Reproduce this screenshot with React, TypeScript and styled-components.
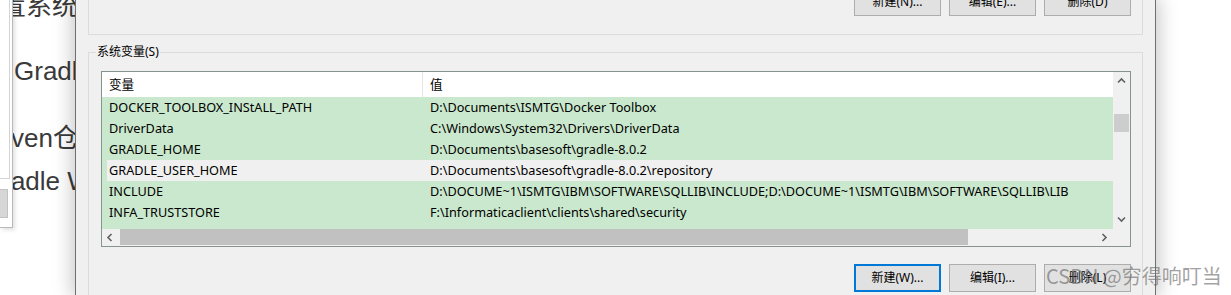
import React from "react";
import styled, { createGlobalStyle } from "styled-components";

const GlobalStyle = createGlobalStyle`
  html, body { margin: 0; padding: 0; background: #ffffff; overflow: hidden; }
  #root { width: 1231px; height: 295px; }
`;

const UI_FONT = `"Noto Sans", "Noto Sans CJK SC", sans-serif`;
const GREEN = "#cae8cd";

const Screen = styled.div`
  position: relative;
  display: flex;
  width: 1231px;
  height: 295px;
  overflow: hidden;
  background: #ffffff;
`;

/* ---------- page behind the dialog ---------- */
const PageStrip = styled.div`
  position: relative;
  flex: none;
  width: 75px;
  height: 295px;
  overflow: hidden;
  background: #ffffff;
`;

const PageLine = styled.div<{ $top: number; $indent: number }>`
  margin-top: ${(p) => p.$top}px;
  margin-left: ${(p) => p.$indent}px;
  font: 26px/30px "Liberation Sans", "Noto Sans CJK SC", sans-serif;
  color: #3a3a3a;
  white-space: nowrap;
`;

const SidePanel = styled.div`
  position: absolute;
  left: 0;
  top: 0;
  width: 12px;
  height: 227px;
  display: flex;
  flex-direction: column;
  background: #ffffff;
  border-right: 1px solid #b9b9b9;
  border-bottom: 1px solid #b9b9b9;
  box-shadow: 2px 2px 4px rgba(0, 0, 0, 0.12);
`;

const SidePanelFrame = styled.div`
  width: 9px;
  height: 178px;
  border-right: 1px solid #d4d4d4;
  border-bottom: 1px solid #d4d4d4;
`;

const SidePanelButton = styled.div`
  width: 7px;
  height: 27px;
  margin-top: 10px;
  background: #d6d6d6;
  border: 1px solid #c2c2c2;
  border-left: none;
`;

/* ---------- dialog ---------- */
const Dialog = styled.div`
  position: relative;
  z-index: 1;
  flex: none;
  width: 1081px;
  height: 295px;
  display: flex;
  flex-direction: column;
  padding: 0 12px;
  box-sizing: border-box;
  background: #f0f0f0;
  border-left: 1px solid #6f6f6f;
  border-right: 1px solid #6f6f6f;
  box-shadow: 0 0 18px 3px rgba(0, 0, 0, 0.22);
  font-family: ${UI_FONT};
`;

const TopGroup = styled.div`
  flex: none;
  height: 34px;
  display: flex;
  justify-content: flex-end;
  align-items: flex-start;
  gap: 8px;
  padding-right: 11px;
  border: 1px solid #dcdcdc;
  border-top: none;
`;

const Button = styled.button<{ $focused?: boolean; $lift?: boolean }>`
  flex: none;
  width: 87px;
  height: 28px;
  margin-top: ${(p) => (p.$lift ? "-12px" : "0")};
  padding: 0;
  box-sizing: border-box;
  background: #e1e1e1;
  border: ${(p) => (p.$focused ? "2px solid #0078d7" : "1px solid #adadad")};
  font: 12px/16px ${UI_FONT};
  color: #000000;
  text-align: center;
`;

const SystemGroup = styled.fieldset`
  flex: none;
  margin: 9px 0 0 0;
  padding: 11px 11px 40px 7px;
  border: 1px solid #dcdcdc;
  min-width: 0;
`;

const GroupLabel = styled.legend`
  padding: 0 1px;
  font: 12px/16px ${UI_FONT};
  color: #000000;
`;

const ListBox = styled.div`
  margin-left: 5px;
  height: 176px;
  box-sizing: border-box;
  border: 1px solid #85958b;
  display: grid;
  grid-template-columns: 1fr 17px;
  grid-template-rows: 157px 17px;
  background: #f0f0f0;
`;

const ListContent = styled.div`
  display: flex;
  flex-direction: column;
  overflow: hidden;
  background: ${GREEN};
`;

const HeaderRow = styled.div`
  flex: none;
  height: 25px;
  display: grid;
  grid-template-columns: 321px 1fr;
  background: #ffffff;
`;

const HeaderCell = styled.div<{ $divider?: boolean }>`
  padding-left: 7px;
  font: 12.6px/25px ${UI_FONT};
  color: #000000;
  border-right: ${(p) => (p.$divider ? "1px solid #e5e5e5" : "none")};
  white-space: nowrap;
`;

const Row = styled.div<{ $selected?: boolean }>`
  flex: none;
  height: 21px;
  margin-left: 5px;
  display: grid;
  grid-template-columns: 316px 1fr;
  background: ${(p) => (p.$selected ? "#f0f0f0" : "transparent")};
`;

const Cell = styled.div<{ $pad: number }>`
  padding-left: ${(p) => p.$pad}px;
  font: 12.7px/21px ${UI_FONT};
  color: #000000;
  white-space: nowrap;
  overflow: hidden;
`;

const VScroll = styled.div`
  display: flex;
  flex-direction: column;
  align-items: center;
  background: #f0f0f0;
`;

const ArrowBox = styled.div<{ $w: number; $h: number }>`
  flex: none;
  width: ${(p) => p.$w}px;
  height: ${(p) => p.$h}px;
  display: flex;
  align-items: center;
  justify-content: center;
`;

const VThumb = styled.div`
  flex: none;
  width: 15px;
  height: 18px;
  margin-top: 23px;
  background: #cdcdcd;
`;

const Spacer = styled.div`
  flex: 1;
`;

const HScroll = styled.div`
  display: flex;
  align-items: flex-start;
  background: #f0f0f0;
`;

const HThumb = styled.div`
  flex: none;
  width: 848px;
  height: 16px;
  margin-left: 1px;
  background: #c1c1c1;
`;

const Corner = styled.div`
  background: #f0f0f0;
`;

const ButtonRow = styled.div`
  display: flex;
  justify-content: flex-end;
  gap: 8px;
  margin-top: 17px;
`;

const Watermark = styled.div`
  position: absolute;
  z-index: 2;
  left: 1046px;
  top: 262px;
  font: 20px/28px "Noto Sans CJK SC", sans-serif;
  color: rgba(100, 100, 100, 0.6);
  white-space: nowrap;
  pointer-events: none;
`;

const Chevron = ({ dir }: { dir: "up" | "down" | "left" | "right" }) => {
  const pts: Record<string, string> = {
    up: "1,5.5 4.5,2 8,5.5",
    down: "1,2.5 4.5,6 8,2.5",
    left: "5.5,1 2,4.5 5.5,8",
    right: "2.5,1 6,4.5 2.5,8",
  };
  return (
    <svg width="9" height="9" viewBox="0 0 9 9">
      <polyline points={pts[dir]} fill="none" stroke="#606060" strokeWidth="1.6" />
    </svg>
  );
};

const rows = [
  { name: "DOCKER_TOOLBOX_INStALL_PATH", value: "D:\\Documents\\ISMTG\\Docker Toolbox" },
  { name: "DriverData", value: "C:\\Windows\\System32\\Drivers\\DriverData" },
  { name: "GRADLE_HOME", value: "D:\\Documents\\basesoft\\gradle-8.0.2" },
  { name: "GRADLE_USER_HOME", value: "D:\\Documents\\basesoft\\gradle-8.0.2\\repository", selected: true },
  {
    name: "INCLUDE",
    value: "D:\\DOCUME~1\\ISMTG\\IBM\\SOFTWARE\\SQLLIB\\INCLUDE;D:\\DOCUME~1\\ISMTG\\IBM\\SOFTWARE\\SQLLIB\\LIB",
  },
  { name: "INFA_TRUSTSTORE", value: "F:\\Informaticaclient\\clients\\shared\\security" },
  { name: "", value: "" },
];

export default function App() {
  return (
    <>
      <GlobalStyle />
      <Screen>
        <PageStrip>
          <PageLine $top={-9} $indent={0}>置系统变量</PageLine>
          <PageLine $top={35} $indent={14}>Gradle</PageLine>
          <PageLine $top={37} $indent={-25}>Maven仓库</PageLine>
          <PageLine $top={13} $indent={-18}>Gradle Wrapper</PageLine>
          <SidePanel>
            <SidePanelFrame />
            <SidePanelButton />
          </SidePanel>
        </PageStrip>

        <Dialog>
          <TopGroup>
            <Button $lift>新建(N)...</Button>
            <Button $lift>编辑(E)...</Button>
            <Button $lift>删除(D)</Button>
          </TopGroup>

          <SystemGroup>
            <GroupLabel>系统变量(S)</GroupLabel>
            <ListBox>
              <ListContent>
                <HeaderRow>
                  <HeaderCell $divider>变量</HeaderCell>
                  <HeaderCell>值</HeaderCell>
                </HeaderRow>
                {rows.map((r, i) => (
                  <Row key={i} $selected={r.selected}>
                    <Cell $pad={2}>{r.name}</Cell>
                    <Cell $pad={7}>{r.value}</Cell>
                  </Row>
                ))}
              </ListContent>
              <VScroll>
                <ArrowBox $w={17} $h={19}>
                  <Chevron dir="up" />
                </ArrowBox>
                <VThumb />
                <Spacer />
                <ArrowBox $w={17} $h={19}>
                  <Chevron dir="down" />
                </ArrowBox>
              </VScroll>
              <HScroll>
                <ArrowBox $w={17} $h={17}>
                  <Chevron dir="left" />
                </ArrowBox>
                <HThumb />
                <Spacer />
                <ArrowBox $w={17} $h={17}>
                  <Chevron dir="right" />
                </ArrowBox>
              </HScroll>
              <Corner />
            </ListBox>
            <ButtonRow>
              <Button $focused>新建(W)...</Button>
              <Button>编辑(I)...</Button>
              <Button>删除(L)</Button>
            </ButtonRow>
          </SystemGroup>
        </Dialog>

        <Watermark>CSDN @穷得响叮当</Watermark>
      </Screen>
    </>
  );
}
